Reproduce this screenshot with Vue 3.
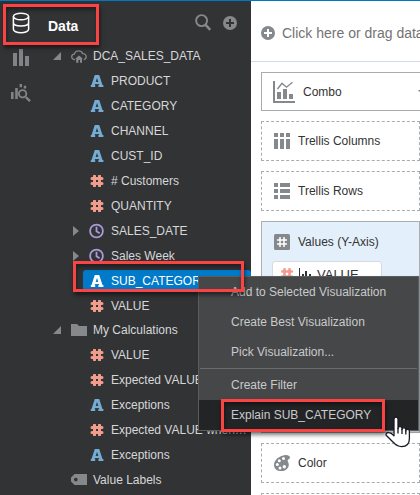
<script setup>
import { ref } from 'vue'

const selected = ref('SUB_CATEGORY')
const chart = ref('Combo')

const groups = [
  {
    name: 'DCA_SALES_DATA',
    icon: 'cloud',
    items: [
      { name: 'PRODUCT', type: 'text' },
      { name: 'CATEGORY', type: 'text' },
      { name: 'CHANNEL', type: 'text' },
      { name: 'CUST_ID', type: 'text' },
      { name: '# Customers', type: 'number' },
      { name: 'QUANTITY', type: 'number' },
      { name: 'SALES_DATE', type: 'date' },
      { name: 'Sales Week', type: 'date' },
      { name: 'SUB_CATEGORY', type: 'text' },
      { name: 'VALUE', type: 'number' }
    ]
  },
  {
    name: 'My Calculations',
    icon: 'folder',
    items: [
      { name: 'VALUE', type: 'number' },
      { name: 'Expected VALUE', type: 'number' },
      { name: 'Exceptions', type: 'text' },
      { name: 'Expected VALUE when…', type: 'number' },
      { name: 'Exceptions', type: 'text' }
    ]
  }
]
</script>

<template>
  <div class="app">
    <nav class="rail" aria-label="Panels">
      <button class="rail-btn active" aria-label="Data">
        <svg width="18" height="22" viewBox="0 0 18 22" fill="none" stroke="currentColor" stroke-width="1.5">
          <ellipse cx="9" cy="4.5" rx="7.6" ry="3.3" />
          <path d="M1.4 4.5V17.3C1.4 19.2 4.8 20.7 9 20.7S16.6 19.2 16.6 17.3V4.5M1.4 10.8C1.4 12.7 4.8 14 9 14S16.6 12.7 16.6 10.8" />
        </svg>
      </button>
      <button class="rail-btn" aria-label="Visualizations">
        <svg width="18" height="18" viewBox="0 0 18 18" fill="currentColor">
          <path d="M1 4h4v13H1zM7 0h4v17H7zM13 7h4v10h-4z" />
        </svg>
      </button>
      <button class="rail-btn" aria-label="Analytics">
        <svg width="20" height="18" viewBox="0 0 20 18" fill="currentColor">
          <path d="M0 8h2.600V15H0zM4.200 4h2.600V15H4.200zM8.600 0H11v3.200H8.600zM12.800 1.800h2.400v2.600h-2.400z" />
          <circle cx="11.600" cy="9.800" r="3.700" fill="none" stroke="currentColor" stroke-width="1.900" />
          <path d="M14.800 13.200L19 17.200" stroke="currentColor" stroke-width="2.300" />
        </svg>
      </button>
    </nav>

    <aside class="panel">
      <header class="panel-head">
        <h2>Data</h2>
        <button class="tool" aria-label="Search">
          <svg width="16" height="17" viewBox="0 0 16 17" fill="none" stroke="currentColor">
            <circle cx="6.6" cy="6.6" r="5.5" stroke-width="1.9" />
            <path d="M10.6 10.9L15.2 15.8" stroke-width="2.5" />
          </svg>
        </button>
        <button class="tool" aria-label="Add">
          <svg width="14" height="14" viewBox="0 0 14 14">
            <circle cx="7" cy="7" r="7" fill="currentColor" />
            <path d="M7 3v8M3 7h8" stroke="#323335" stroke-width="2" />
          </svg>
        </button>
      </header>

      <section v-for="group in groups" :key="group.name">
        <div class="group-row">
          <button class="toggle" :aria-label="'Collapse ' + group.name">
            <svg width="8" height="8" viewBox="0 0 8 8"><path d="M8 0V8H0z" fill="currentColor" /></svg>
          </button>
          <svg v-if="group.icon === 'cloud'" class="dim" width="16" height="13" viewBox="0 0 16 13" fill="none" stroke="currentColor" stroke-width="1.3">
            <path d="M4 9.6C1.9 9.6.7 8.4.7 6.9S1.9 4.3 3.3 4.2C3.8 2.2 5.4.8 7.5.8c2 0 3.5 1 4.2 2.9 2 0 3.5 1.3 3.5 3.1 0 1.4-.9 2.5-2.4 2.8" />
            <path d="M4.200 8.800L8 5.400l4 3.400z" fill="currentColor" stroke="none" />
            <path d="M5.200 8h5.800v4.800H9V10H7.400v2.800H5.200z" fill="currentColor" stroke="none" />
          </svg>
          <svg v-else class="dim" width="16" height="12" viewBox="0 0 16 12">
            <path d="M0 0h6l2 2h8v10H0z" fill="currentColor" />
          </svg>
          <span>{{ group.name }}</span>
        </div>
        <ul>
          <li v-for="(item, i) in group.items" :key="i" class="leaf-row">
            <span class="leaf-toggle">
              <button v-if="item.type === 'date'" class="toggle" :aria-label="'Expand ' + item.name">
                <svg width="6" height="10" viewBox="0 0 6 10"><path d="M0 0L6 5L0 10z" fill="currentColor" /></svg>
              </button>
            </span>
            <button class="leaf" :class="{ selected: selected === item.name }" @click="selected = item.name">
              <svg v-if="item.type === 'text'" class="text-icon" width="16" height="12" viewBox="0 0 16 12" fill="none" stroke="currentColor">
                <path d="M3.600 11.500L7.200 0.500H8.800L12.400 11.500" stroke-width="3" stroke-linejoin="bevel" />
                <path d="M5 8h6" stroke-width="2.200" />
                <path d="M1.800 11h4.400M9.400 11h5" stroke-width="2" />
              </svg>
              <svg v-else-if="item.type === 'number'" class="number-icon" width="16" height="12" viewBox="0 0 16 12">
                <path d="M5.5 1v10M10.500 1v10M3 3.500h10M3 8.500h10" stroke="currentColor" stroke-width="3" stroke-linecap="round" />
              </svg>
              <svg v-else class="date-icon" width="16" height="16" viewBox="0 0 16 16" fill="none" stroke="currentColor" stroke-width="1.8">
                <circle cx="7.500" cy="8" r="6.400" />
                <path d="M7.500 3.800V8.200L10.600 10.300" />
              </svg>
              <span>{{ item.name }}</span>
            </button>
          </li>
        </ul>
      </section>
      <div class="labels-row">
        <svg class="dim" width="16" height="11" viewBox="0 0 16 11">
          <path d="M3.6 0H16v11H3.6L0 7.6V3.4zM4.8 3.7a1.8 1.8 0 1 0 .01 0z" fill="currentColor" fill-rule="evenodd" />
        </svg>
        <span>Value Labels</span>
      </div>
    </aside>

    <main class="canvas">
      <button class="drop-filter">
        <svg width="14" height="14" viewBox="0 0 14 14">
          <circle cx="7" cy="7" r="7" fill="#85898c" />
          <path d="M7 3v8M3 7h8" stroke="#fff" stroke-width="2" />
        </svg>
        <span>Click here or drag data</span>
      </button>

      <div class="zones">
        <label class="chart-type">
          <svg width="22" height="22" viewBox="0 0 22 22" fill="#85898c">
            <path d="M0 0h2v20h20v2H0zM4 11h4v7H4zM10 8h4v10h-4zM16 13h4v5h-4z" />
            <path d="M4.500 8L9 2.200L13.500 6.200L19.500 1.200" fill="none" stroke="#85898c" stroke-width="1.400" />
          </svg>
          <select v-model="chart" aria-label="Visualization type">
            <option>Combo</option>
          </select>
          <svg class="arrow" width="8" height="4" viewBox="0 0 8 4"><path d="M0 0h8L4 4z" fill="#77706a" /></svg>
        </label>

        <div class="zone">
          <svg width="16" height="16" viewBox="0 0 16 16" fill="#85898c">
            <path d="M0 0h4v4H0zM6 0h4v4H6zM12 0h4v4h-4zM0 6h4v10H0zM6 6h4v10H6zM12 6h4v10h-4z" />
          </svg>
          <span>Trellis Columns</span>
        </div>
        <div class="zone">
          <svg width="16" height="16" viewBox="0 0 16 16" fill="#85898c">
            <path d="M0 0h4v4H0zM0 6h4v4H0zM0 12h4v4H0zM6 0h10v4H6zM6 6h10v4H6zM6 12h10v4H6z" />
          </svg>
          <span>Trellis Rows</span>
        </div>
        <div class="values">
          <div class="values-head">
            <svg width="16" height="16" viewBox="0 0 16 16">
              <rect width="16" height="16" rx="1.500" fill="#85898c" />
              <path d="M6 3v10M10 3v10M3 6h10M3 10h10" stroke="#fff" stroke-width="1.500" />
            </svg>
            <span>Values (Y-Axis)</span>
          </div>
          <div class="pill">
            <svg class="number-icon" width="12" height="12" viewBox="0 0 12 12">
              <path d="M3.500 1.200v9.600M8.500 1.200v9.600M1.200 3.500h9.600M1.200 8.500h9.600" stroke="currentColor" stroke-width="2.600" stroke-linecap="round" />
            </svg>
            <svg width="12" height="12" viewBox="0 0 12 12" fill="#333">
              <path d="M0 0h1v12H0zM3 6h2v6H3zM6 3h2v9H6zM10 6h2v6h-2z" />
            </svg>
            <span>VALUE</span>
          </div>
        </div>
        <div class="zone">
          <svg width="16" height="16" viewBox="0 0 16 16">
            <path d="M10.2.2C13.2-.3 16 .5 16 2.6c0 1.6-2.4 1.7-2.4 3.2 0 1.3 1.2 1.700 1.200 3.600C14.800 13.400 11.500 16 7.300 16 3 16 0 13.700 0 9.900 0 5 5 1 10.200.2z" fill="#85898c" />
            <g fill="#fff">
              <circle cx="9.500" cy="3.600" r="1.500" />
              <circle cx="5.300" cy="5.700" r="1.500" />
              <circle cx="3.300" cy="9.500" r="1.500" />
              <circle cx="6" cy="13" r="1.500" />
              <circle cx="10.300" cy="11.700" r="1.700" />
            </g>
          </svg>
          <span>Color</span>
        </div>
        <div class="zone"></div>
      </div>
    </main>

    <div class="menu" role="menu">
      <button role="menuitem">Add to Selected Visualization</button>
      <button role="menuitem">Create Best Visualization</button>
      <button role="menuitem">Pick Visualization...</button>
      <hr />
      <button role="menuitem">Create Filter</button>
      <button role="menuitem" class="hovered">Explain SUB_CATEGORY</button>
    </div>

    <div class="mark mark-data"></div>
    <div class="mark mark-column"></div>
    <div class="mark mark-explain"></div>

    <svg class="pointer" width="26" height="32" viewBox="0 0 26 32">
      <path d="M9 19V3.200C9 .5 13 .5 13 3.200V12.500C13 9.900 17 9.900 17 12.500V13.500C17 11.200 20.800 11.200 20.800 13.500V15C20.800 12.900 24.400 12.900 24.400 15.200V22.500C24.400 27.500 21.500 30.600 16.600 30.600 12.500 30.600 10.500 29 8.200 26.200L1.400 19.500C.2 17.800 2.200 16 4.200 16.700 6 17.200 7.500 18.300 9 19.700z" fill="#fff" stroke="#181a26" stroke-width="1.300" stroke-linejoin="round" />
      <path d="M13 12v5.500M17 13v5M20.800 14.500v4" stroke="#181a26" stroke-width="1.300" />
    </svg>
  </div>
</template>

<style>
body {
  margin: 0;
  overflow: hidden;
}
</style>

<style scoped>
.app {
  position: relative;
  display: flex;
  height: 100vh;
  box-sizing: border-box;
  overflow: hidden;
  border-top: 1px solid #0079c4;
  background: #fff;
  font-family: "Liberation Sans", Arial, sans-serif;
  font-size: 12px;
  color: #333;
}
button {
  display: flex;
  align-items: center;
  margin: 0;
  padding: 0;
  border: 0;
  background: none;
  font: inherit;
  color: inherit;
  text-align: left;
}
svg {
  flex: none;
  display: block;
}
.rail {
  flex: none;
  width: 42px;
  padding-top: 4px;
  background: #323335;
  color: #808488;
}
.rail-btn {
  width: 100%;
  height: 35px;
  justify-content: center;
}
.rail-btn.active {
  color: #fff;
}
.panel {
  flex: none;
  width: 209px;
  background: #323335;
  color: #d6d7d8;
}
.panel-head {
  display: flex;
  align-items: center;
  gap: 12px;
  height: 43px;
  padding: 0 14px 0 6px;
  box-sizing: border-box;
}
.panel-head h2 {
  flex: 1;
  margin: 0;
  padding-top: 6px;
  font-size: 14px;
  color: #fff;
}
.tool,
.toggle,
.dim {
  color: #85898c;
}
.group-row {
  display: flex;
  align-items: center;
  height: 24px;
  gap: 6px;
  padding-left: 11px;
}
.group-row .toggle {
  width: 12px;
}
ul {
  list-style: none;
  margin: 0;
  padding: 0;
}
.leaf-row {
  display: flex;
  align-items: center;
  height: 25px;
}
.leaf-toggle {
  width: 41px;
  display: flex;
  justify-content: flex-end;
}
.leaf-toggle .toggle {
  width: 10px;
}
.leaf {
  flex: 1;
  min-width: 0;
  height: 21px;
  gap: 6px;
  padding-left: 6px;
  border-radius: 3px;
  white-space: nowrap;
}
.leaf.selected,
.leaf.selected .text-icon {
  color: #fff;
}
.leaf.selected {
  background: #007ac9;
}
.text-icon {
  color: #74acd3;
}
.number-icon {
  color: #f29c8e;
}
.date-icon {
  color: #a99bd6;
}
.labels-row {
  display: flex;
  align-items: center;
  height: 25px;
  gap: 6px;
  padding-left: 29px;
}
.canvas {
  flex: 1;
  min-width: 0;
  overflow: hidden;
}
.drop-filter {
  width: 100%;
  height: 61px;
  gap: 7px;
  padding: 4px 0 0 10px;
  border-bottom: 1px solid #d3dce6;
  font-size: 14px;
  color: #737373;
  white-space: nowrap;
}
.zones {
  display: flex;
  flex-direction: column;
  gap: 10px;
  padding: 10px 0 0 10px;
}
.chart-type {
  display: flex;
  align-items: center;
  height: 39px;
  box-sizing: border-box;
  margin-right: -10px;
  padding: 0 3px 0 11px;
  border: 1px solid #a9acae;
}
.chart-type select {
  flex: 1;
  appearance: none;
  margin: 0;
  padding: 0 0 0 8px;
  border: 0;
  background: none;
  font: inherit;
  color: inherit;
}
.zone {
  display: flex;
  align-items: center;
  gap: 8px;
  height: 40px;
  box-sizing: border-box;
  padding-left: 12px;
  border: 1px dashed #a9acae;
}
.values {
  height: 212px;
  box-sizing: border-box;
  border: 1px solid #a9b0b5;
  background: #e3effa;
}
.values-head {
  display: flex;
  align-items: center;
  gap: 8px;
  height: 39px;
  padding-left: 12px;
}
.pill {
  display: flex;
  align-items: center;
  gap: 6px;
  width: 110px;
  height: 26px;
  box-sizing: border-box;
  margin-left: 10px;
  padding-left: 8px;
  border: 1px solid #d5dbe0;
  border-radius: 3px;
  background: #fff;
  font-size: 13px;
}
.menu {
  position: absolute;
  left: 198px;
  right: 1px;
  top: 275px;
  border: 1px solid #5c5d5f;
  background: #464749;
  box-shadow: 1px 1px 2px rgba(0, 0, 0, 0.3);
  color: #c9cacb;
}
.menu button {
  width: 100%;
  height: 30px;
  padding-left: 32px;
}
.menu button.hovered {
  background: #232426;
}
.menu hr {
  height: 1px;
  margin: 1px;
  border: 0;
  background: #6a6b6d;
}
.mark {
  position: absolute;
  box-sizing: border-box;
  border: 3px solid #fb4343;
  box-shadow: 1px 3px 4px rgba(0, 0, 0, 0.5), inset 1px 3px 4px rgba(0, 0, 0, 0.4);
  pointer-events: none;
}
.mark-data {
  left: 3px;
  top: 3px;
  width: 96px;
  height: 41px;
}
.mark-column {
  left: 73px;
  top: 260px;
  width: 171px;
  height: 31px;
}
.mark-explain {
  left: 221px;
  top: 398px;
  width: 164px;
  height: 33px;
}
.pointer {
  position: absolute;
  left: 385px;
  top: 415px;
  pointer-events: none;
}
</style>
